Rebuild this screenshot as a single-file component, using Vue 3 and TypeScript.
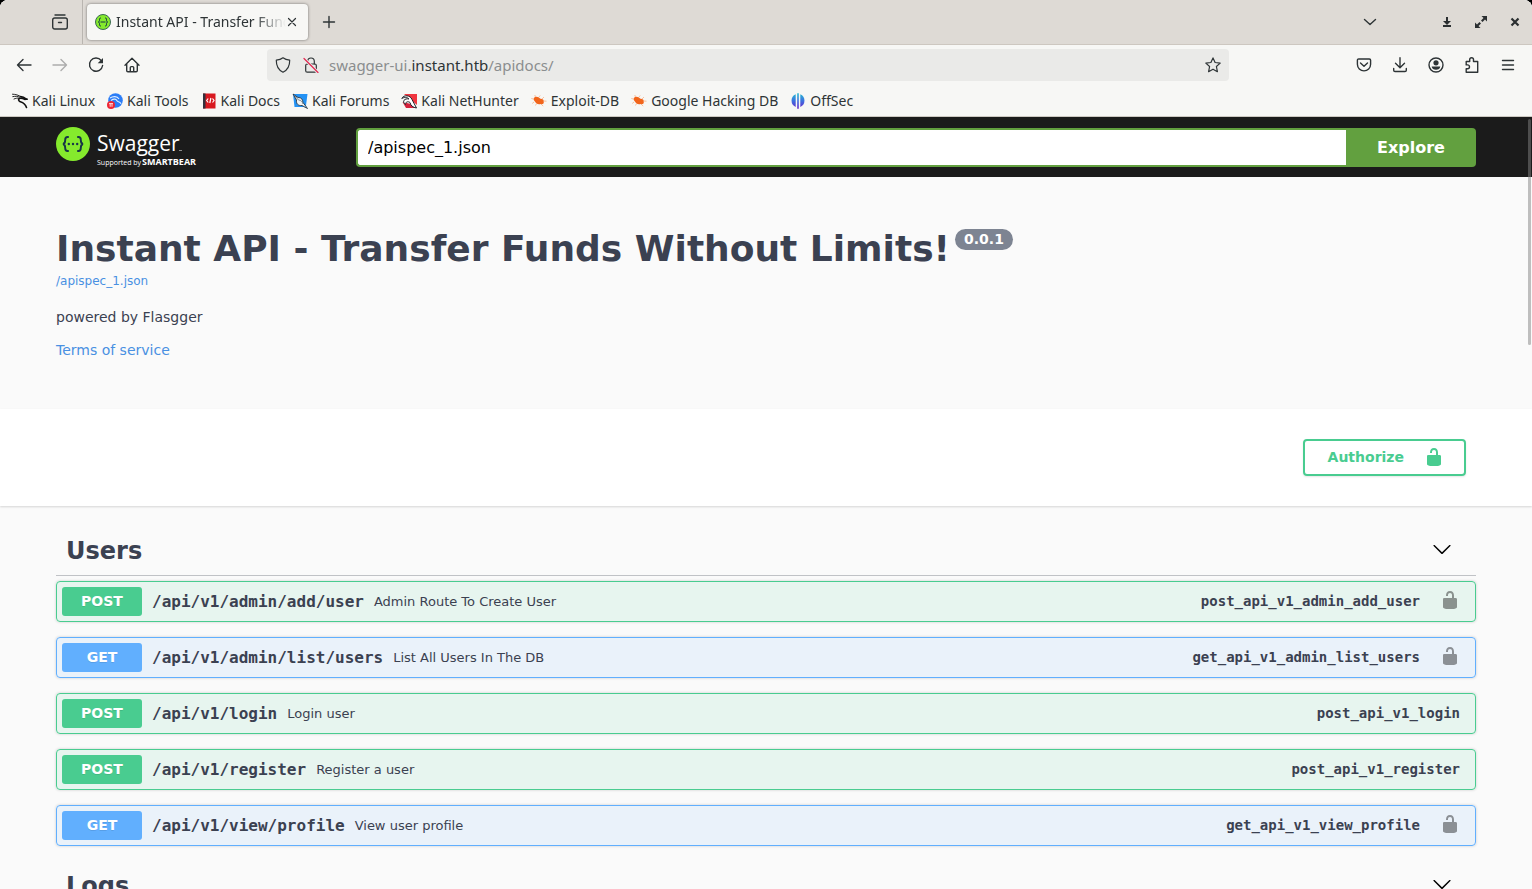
<script setup lang="ts">
import { ref } from 'vue'

type Method = 'POST' | 'GET'

interface Operation {
  method: Method
  path: string
  summary: string
  id: string
  locked: boolean
}

interface Tag {
  name: string
  open: boolean
  operations: Operation[]
}

const bookmarks = [
  { label: 'Kali Linux', icon: 'dragon' },
  { label: 'Kali Tools', icon: 'tools' },
  { label: 'Kali Docs', icon: 'docs' },
  { label: 'Kali Forums', icon: 'forums' },
  { label: 'Kali NetHunter', icon: 'nethunter' },
  { label: 'Exploit-DB', icon: 'bug' },
  { label: 'Google Hacking DB', icon: 'bug' },
  { label: 'OffSec', icon: 'offsec' },
]

const specUrl = ref('/apispec_1.json')

const tags = ref<Tag[]>([
  {
    name: 'Users',
    open: true,
    operations: [
      { method: 'POST', path: '/api/v1/admin/add/user', summary: 'Admin Route To Create User', id: 'post_api_v1_admin_add_user', locked: true },
      { method: 'GET', path: '/api/v1/admin/list/users', summary: 'List All Users In The DB', id: 'get_api_v1_admin_list_users', locked: true },
      { method: 'POST', path: '/api/v1/login', summary: 'Login user', id: 'post_api_v1_login', locked: false },
      { method: 'POST', path: '/api/v1/register', summary: 'Register a user', id: 'post_api_v1_register', locked: false },
      { method: 'GET', path: '/api/v1/view/profile', summary: 'View user profile', id: 'get_api_v1_view_profile', locked: true },
    ],
  },
  { name: 'Logs', open: true, operations: [] },
])

const lockPath =
  'M15.8 8H14V5.6C14 2.703 12.665 1 10 1 7.334 1 6 2.703 6 5.6V6h2v-.801C8 3.754 8.797 3 10 3c1.203 0 2 .754 2 2.199V8H4c-.553 0-1 .646-1 1.199V17c0 .549.428 1.139.951 1.307l1.197.387C5.672 18.861 6.55 19 7.1 19h5.8c.549 0 1.428-.139 1.951-.307l1.196-.387c.524-.167.953-.757.953-1.306V9.199C17 8.646 16.352 8 15.8 8z'
</script>

<template>
  <div class="window">
    <header class="chrome">
      <div class="tabstrip">
        <button class="tool recent" aria-label="Recent browsing">
          <svg class="line bold" viewBox="0 0 16 16"><path d="M3 1h10" /><rect x=".7" y="4" width="14.6" height="11" rx="2" /><path d="M6.500 8.500h3" /></svg>
        </button>
        <div class="tab">
          <svg class="favicon" viewBox="0 0 16 16">
            <circle cx="8" cy="8" r="7.5" fill="#85ea2d" stroke="#3b6a52" />
            <path d="M6 4c-1.400 0-1.600.6-1.500 1.800.1 1.300-.2 2-1.200 2.200 1 .2 1.300.9 1.200 2.200C4.400 11.400 4.600 12 6 12M10 4c1.400 0 1.600.6 1.500 1.800-.1 1.300.2 2 1.200 2.200-1 .2-1.300.9-1.200 2.200.1 1.200-.1 1.800-1.500 1.800M5.500 8h5" fill="none" stroke="#173647" />
          </svg>
          <span class="tab-title">Instant API - Transfer Funds</span>
          <button class="tab-close" aria-label="Close tab">
            <svg class="line" viewBox="0 0 10 10"><path d="M1.500 1.500l7 7M8.500 1.500l-7 7" /></svg>
          </button>
        </div>
        <button class="tool newtab" aria-label="New tab">
          <svg class="line bold" viewBox="0 0 16 16"><path d="M8 2.500v11M2.500 8h11" /></svg>
        </button>
        <div class="grow"></div>
        <button class="tool alltabs" aria-label="List all tabs">
          <svg class="line bold" viewBox="0 0 16 16"><path d="M2.500 5.500L8 10.500l5.500-5" /></svg>
        </button>
        <button class="win" aria-label="Minimize">
          <svg viewBox="0 0 12 12"><path d="M5 1h2v4h3L6 9 2 5h3zM2 9h8v2H2z" fill="#2b2f31" /></svg>
        </button>
        <button class="win" aria-label="Maximize">
          <svg viewBox="0 0 12 12"><path d="M6.500 0H12v5.500l-2-2L7.500 6 6 4.500 8.500 2zM0 6.500l2 2L4.500 6 6 7.500 3.500 10l2 2H0z" fill="#2b2f31" /></svg>
        </button>
        <button class="win" aria-label="Close window">
          <svg viewBox="0 0 12 12"><path d="M2.500 2.500l7 7M9.500 2.500l-7 7" stroke="#2b2f31" stroke-width="2.200" /></svg>
        </button>
      </div>

      <nav class="navbar" aria-label="Navigation">
        <button class="tool" aria-label="Back">
          <svg class="line bold" viewBox="0 0 16 16"><path d="M15 8H1.500M7 2.500L1.500 8 7 13.500" /></svg>
        </button>
        <button class="tool faded" aria-label="Forward">
          <svg class="line bold" viewBox="0 0 16 16"><path d="M1 8h13.500M9 2.500L14.500 8 9 13.500" /></svg>
        </button>
        <button class="tool" aria-label="Reload">
          <svg class="line bold" viewBox="0 0 16 16"><path d="M13.200 3.500A6.600 6.600 0 1 0 14.600 8.500" /><path d="M15 1v5.300H9.700z" fill="currentColor" stroke="none" /></svg>
        </button>
        <button class="tool" aria-label="Home">
          <svg class="line bold" viewBox="0 0 16 16"><path d="M1 8.300L8 1.300l7 7M2.700 7v6.500c0 .8.400 1.200 1.200 1.200h8.200c.8 0 1.200-.4 1.200-1.200V7M6.300 14.500v-4c0-.6.300-.9.900-.9h1.600c.6 0 .9.300.9.900v4" /></svg>
        </button>
        <div class="spring"></div>
        <div class="urlbar">
          <svg class="line" viewBox="0 0 16 16"><path d="M8 .8c2 1.600 4.300 2.200 6.700 2.400C14.800 8.700 12.500 13 8 15.200 3.500 13 1.200 8.700 1.300 3.200 3.700 3 6 2.400 8 .8z" /></svg>
          <svg class="line" viewBox="0 0 16 16"><path d="M4.700 7V4.300a3.300 3.300 0 0 1 6.600 0V7" /><rect x="2.700" y="7" width="10.600" height="8.200" rx="1.500" /><path d="M1 1.500l14 14" class="slash-gap" /><path d="M1 1.500l14 14" class="slash" /></svg>
          <span class="address">swagger-ui.<b>instant.htb</b>/apidocs/</span>
          <button class="star" aria-label="Bookmark this page">
            <svg class="line" viewBox="0 0 16 16"><path d="M8 .9l2.100 4.600 5.100.6-3.800 3.400 1 5.200L8 12.200l-4.400 2.500 1-5.200L.8 6.100l5.100-.6z" /></svg>
          </button>
        </div>
        <div class="spring"></div>
        <button class="tool" aria-label="Save to Pocket">
          <svg class="line bold" viewBox="0 0 16 16"><path d="M2.700 2h10.600c.8 0 1.300.5 1.300 1.300v4a6.600 6.600 0 0 1-13.200 0v-4C1.400 2.500 1.900 2 2.700 2z" /><path d="M4.500 6L8 9.300 11.500 6" /></svg>
        </button>
        <button class="tool" aria-label="Downloads">
          <svg class="line bold" viewBox="0 0 16 16"><path d="M8 .7v9.800M3.500 6.300L8 10.700l4.500-4.400M1.700 11.500v1.700c0 .9.400 1.300 1.300 1.300h10c.9 0 1.300-.4 1.300-1.300v-1.700" /></svg>
        </button>
        <button class="tool" aria-label="Account">
          <svg class="line bold" viewBox="0 0 16 16"><circle cx="8" cy="8" r="7" /><circle cx="8" cy="5.800" r="2.600" fill="currentColor" stroke="none" /><path d="M3.700 9.500h8.600c0 2-2 3.300-4.300 3.300s-4.300-1.300-4.300-3.300z" fill="currentColor" stroke="none" /></svg>
        </button>
        <button class="tool" aria-label="Extensions">
          <svg class="line bold" viewBox="0 0 16 16"><path d="M2.200 4.500h3.500V2.600a1.900 1.900 0 0 1 3.800 0v1.900h4.200v10.700H2.200v-3.500h1.400a1.900 1.900 0 0 0 0-3.800H2.200z" /></svg>
        </button>
        <button class="tool" aria-label="Application menu">
          <svg class="line bold" viewBox="0 0 16 16"><path d="M2.500 3.500h11M2.500 8h11M2.500 12.500h11" /></svg>
        </button>
      </nav>

      <nav class="bookmarks" aria-label="Bookmarks">
        <a v-for="mark in bookmarks" :key="mark.label" href="#" class="bookmark">
          <svg viewBox="0 0 16 16">
            <g v-if="mark.icon === 'dragon'" fill="none" stroke="#111" stroke-linecap="round">
              <path d="M.5 1.200c3 .1 6 .8 8.500 2.600M.8 3.600c2.700-.5 5-.3 7 .6M2 6c1.700-.8 3.500-1.100 5-.8" stroke-width=".9" />
              <path d="M8.500 3.500c2 .2 3.700.8 4.700 1.900l1.500.7-2 .3c-1.700-.8-3.700-1.400-5.200-.9-1.500.8-1 2.600.7 3.200 2.500.8 5 1.500 6.300 5.800" stroke-width="1.600" />
            </g>
            <g v-else-if="mark.icon === 'tools'">
              <circle cx="8.500" cy="7.500" r="7.300" fill="#2b7df7" />
              <path d="M3 5c3-2 7-2 9 1M4 7.500c3-2 5-1.500 6 .2.800 1.300 3 .8 4 3" fill="none" stroke="#dcecff" stroke-width="1.200" />
              <circle cx="4" cy="12" r="4" fill="#ee2634" />
              <path d="M2 10.600h4M3.200 10.600v3.200M5 10.600v3.200" fill="none" stroke="#fff" stroke-width=".8" />
            </g>
            <g v-else-if="mark.icon === 'docs'">
              <path d="M2 .5h12.500v15H2z" fill="#d81920" />
              <path d="M2 .5h2.500v15H2z" fill="#33313d" />
              <path d="M7.200 5.500L5.700 7.500l1.500 2M11.500 5.500l1.500 2-1.500 2M9.900 5L8.800 10" fill="none" stroke="#fff" stroke-width="1.200" />
            </g>
            <g v-else-if="mark.icon === 'forums'">
              <path d="M1 1h14.500L14 12.500l.5 2-3-.5H2.500z" fill="#2492f4" />
              <path d="M1 1l5 3.500c3.500 0 4.500 1.500 5 5l4.500 6-5.500-3c-4 .5-6-2-5.500-5.500z" fill="#f1f3f4" stroke="#263746" stroke-width=".9" />
              <path d="M2.500 2.500l4 4.500c2.500 0 4 2 4.500 4" fill="none" stroke="#60717e" stroke-width=".8" />
            </g>
            <g v-else-if="mark.icon === 'nethunter'">
              <path d="M3 1h13v11z" fill="#f0353f" />
              <path d="M1.500 9L5 15h9l-4-4z" fill="#d5203c" />
              <path d="M.8 5.500C2.500 1.500 9.500 2 11 6.500l4.500 8.500c-3.500-.5-6-2.500-6.500-5.500-2-1.500-4.500-.8-4.500 2C.5 8.500 3.500 5 8 6 6 3.800 3.500 4 .8 5.500z" fill="#fff" stroke="#1d2028" stroke-width="1" />
            </g>
            <g v-else-if="mark.icon === 'bug'">
              <path d="M3 4.800c2.200-2 4.500-.8 6.500.9 2.400 0 3.800 1.800 3.200 3.200.6 1.600-1.300 2.800-3.200 2-2.400.8-4.600-.5-5.600-2.400C2.600 7.300 2.300 6.300 3 4.800z" fill="#f2651b" />
              <path d="M4.500 4L3.800 2M8 4l1.200-1.500M11 6l2-2M12.500 8l3 .2M3 9l-1.800 1.500M5.500 10.500L4.500 12.500M10 11l2.200 2.200M2.500 6L.3 5.500" fill="none" stroke="#f7a878" stroke-width=".7" />
            </g>
            <g v-else>
              <path d="M5.700 1.200v12.800A7 7 0 0 1 5.700 1.200zM10.300 1.200v12.800a7 7 0 0 0 0-12.800zM7.200.3h1.600v15.500H7.200z" fill="url(#offsec-fill)" />
              <defs>
                <linearGradient id="offsec-fill" gradientUnits="userSpaceOnUse" x1="0" y1="0" x2="0" y2="16">
                  <stop offset="0" stop-color="#25bfd0" /><stop offset=".5" stop-color="#3d6fe0" /><stop offset="1" stop-color="#6a22c8" />
                </linearGradient>
              </defs>
            </g>
          </svg>
          <span>{{ mark.label }}</span>
        </a>
      </nav>
    </header>

    <div class="viewport">
      <div class="topbar">
        <div class="wrapper topbar-row">
          <a href="#" class="brand" aria-label="Swagger, supported by SmartBear">
            <svg viewBox="0 0 142 40">
              <circle cx="17" cy="17" r="17" fill="#85ea2d" />
              <path d="M12.800 10h-1.300c-2 0-2.300 1-2.300 2.700 0 2.400.1 3.800-2.200 4.300 2.300.5 2.200 1.900 2.200 4.300 0 1.700.3 2.700 2.300 2.700h1.300M21.200 10h1.300c2 0 2.300 1 2.300 2.700 0 2.400-.1 3.800 2.200 4.300-2.300.5-2.200 1.900-2.200 4.300 0 1.700-.3 2.700-2.300 2.700h-1.300" fill="none" stroke="#173647" stroke-width="1.900" />
              <g fill="#173647"><circle cx="12.800" cy="17" r="1.200" /><circle cx="17" cy="17" r="1.200" /><circle cx="21.200" cy="17" r="1.200" /></g>
              <text x="41" y="24" class="word">Swagger</text>
              <path d="M123 23.500h3" stroke="#aaa" stroke-width=".8" />
              <text x="41" y="38" class="supported">Supported by</text>
              <text x="86" y="38" class="smartbear">SMARTBEAR</text>
            </svg>
          </a>
          <form class="spec-form" @submit.prevent>
            <input v-model="specUrl" type="text" aria-label="Specification URL" />
            <button type="submit">Explore</button>
          </form>
        </div>
      </div>

      <main>
        <section class="wrapper info">
          <h1>Instant API - Transfer Funds Without Limits!<span class="version">0.0.1</span></h1>
          <a href="#" class="spec-link">/apispec_1.json</a>
          <p>powered by Flasgger</p>
          <a href="#" class="terms">Terms of service</a>
        </section>

        <section class="schemes">
          <div class="wrapper schemes-row">
            <button class="authorize">
              <span>Authorize</span>
              <svg viewBox="0 0 20 20"><path :d="lockPath" /></svg>
            </button>
          </div>
        </section>

        <div class="wrapper tags">
          <section v-for="tag in tags" :key="tag.name">
            <h2>
              <button class="tag" :aria-expanded="tag.open" @click="tag.open = !tag.open">
                <span>{{ tag.name }}</span>
                <svg viewBox="0 0 20 20"><path d="M17.418 6.109c.272-.268.709-.268.979 0s.271.701 0 .969l-7.908 7.830c-.270.268-.707.268-.979 0l-7.908-7.830c-.270-.268-.270-.701 0-.969.271-.268.709-.268.979 0L10 13.250l7.418-7.141z" /></svg>
              </button>
            </h2>
            <template v-if="tag.open">
              <button v-for="op in tag.operations" :key="op.id" class="op" :class="op.method.toLowerCase()">
                <span class="method">{{ op.method }}</span>
                <span class="path">{{ op.path }}</span>
                <span class="summary">{{ op.summary }}</span>
                <span class="op-id">{{ op.id }}</span>
                <svg v-if="op.locked" class="lock" viewBox="0 0 20 20"><path :d="lockPath" /></svg>
              </button>
            </template>
          </section>
        </div>
      </main>
      <div class="scroll-thumb"></div>
    </div>
  </div>
</template>

<style>
body {
  margin: 0;
  background: #000;
}
</style>

<style scoped>
* {
  box-sizing: border-box;
}
button {
  margin: 0;
  padding: 0;
  border: 0;
  background: none;
  font: inherit;
  color: inherit;
}
a {
  text-decoration: none;
}
svg {
  display: block;
  flex: none;
}
.window {
  display: flex;
  flex-direction: column;
  height: 100vh;
  overflow: hidden;
  border-radius: 8px 8px 0 0;
  background: #fafafa;
  font-family: "DejaVu Sans", sans-serif;
  color: #3b4151;
}

/* Browser chrome */
.chrome {
  flex: none;
  background: #f7f7f5;
  border-bottom: 1px solid #cdc9c2;
  color: #2e3436;
  font: 14px/20px "Noto Sans", sans-serif;
}
.line {
  width: 16px;
  height: 16px;
  fill: none;
  stroke: currentColor;
  stroke-width: 1.2;
  stroke-linecap: round;
  stroke-linejoin: round;
}
.bold {
  stroke-width: 1.4;
}
.grow {
  flex: 1;
}
.tabstrip {
  display: flex;
  align-items: center;
  height: 45px;
  background: #dedad5;
  border-bottom: 1px solid #cdc7c0;
}
.tool {
  display: grid;
  place-items: center;
  width: 36px;
  height: 36px;
}
.recent {
  width: 83px;
  height: 44px;
  padding-left: 37px;
  border-right: 1px solid #b9b5b0;
}
.tab {
  display: flex;
  align-items: center;
  width: 221px;
  height: 36px;
  margin-left: 4px;
  padding: 0 10px 0 8px;
  border-radius: 4px;
  background: #f7f7f5;
  box-shadow: 0 0 3px rgba(0, 0, 0, 0.5);
}
.favicon {
  width: 16px;
  height: 16px;
}
.tab-title {
  flex: 1;
  margin-left: 5px;
  overflow: hidden;
  white-space: nowrap;
  mask-image: linear-gradient(to left, transparent, #000 32px);
}
.tab-close {
  display: grid;
  place-items: center;
  width: 12px;
  height: 20px;
}
.tab-close .line {
  width: 10px;
  height: 10px;
}
.newtab {
  margin-left: 3px;
}
.alltabs {
  margin-right: 42px;
}
.win {
  display: grid;
  place-items: center;
  width: 34px;
  height: 36px;
}
.win svg {
  width: 12px;
  height: 12px;
}
.navbar {
  display: flex;
  align-items: center;
  height: 40px;
  padding: 0 6px;
}
.faded {
  color: #adadac;
}
.spring {
  flex: 117;
}
.urlbar {
  flex: 946;
  display: flex;
  align-items: center;
  gap: 12px;
  height: 32px;
  padding: 0 8px;
  border-radius: 4px;
  background: #eaeae8;
}
.slash-gap {
  stroke: #eaeae8;
  stroke-width: 3;
}
.slash {
  stroke: #e22850;
}
.address {
  flex: 1;
  margin-left: -2px;
  font-size: 15px;
  color: #8b8e8f;
}
.address b {
  font-weight: 400;
  color: #2e3436;
}
.bookmarks {
  display: flex;
  gap: 12px;
  height: 31px;
  padding: 0 12px;
}
.bookmark {
  display: flex;
  align-items: center;
  gap: 4px;
  color: #2e3436;
  white-space: nowrap;
}
.bookmark svg {
  width: 16px;
  height: 16px;
}

/* API page */
.viewport {
  position: relative;
  flex: 1;
  min-height: 0;
  overflow: hidden;
}
.scroll-thumb {
  position: absolute;
  top: 2px;
  right: 1px;
  width: 3px;
  height: 226px;
  border-radius: 2px;
  background: rgba(130, 130, 130, 0.5);
}
.wrapper {
  width: 100%;
  max-width: 1460px;
  margin: 0 auto;
  padding: 0 20px;
}
.topbar {
  background: #1b1b1b;
}
.topbar-row {
  display: flex;
  align-items: center;
  padding-top: 10px;
  padding-bottom: 10px;
}
.brand {
  flex: none;
  width: 300px;
}
.brand svg {
  width: 142px;
  height: 40px;
  overflow: visible;
}
.word,
.supported,
.smartbear {
  fill: #fff;
  font-family: "Open Sans", sans-serif;
}
.word {
  font-size: 21px;
}
.supported {
  font-size: 7px;
}
.smartbear {
  font-size: 9px;
  font-weight: 700;
}
.spec-form {
  display: flex;
  flex: 1;
  height: 39px;
}
.spec-form input {
  flex: 1;
  min-width: 0;
  padding: 0 10px;
  border: 2px solid #62a03f;
  border-right: 0;
  border-radius: 4px 0 0 4px;
  background: #fff;
  font: 16px "DejaVu Sans", sans-serif;
  color: #000;
  outline: none;
}
.spec-form button {
  width: 130px;
  border-radius: 0 4px 4px 0;
  background: #62a03f;
  font-size: 16px;
  font-weight: 700;
  color: #fff;
}
.info {
  padding-top: 51px;
  padding-bottom: 51px;
  font-size: 14px;
  line-height: 16px;
}
.info h1 {
  display: flex;
  align-items: flex-start;
  margin: 0;
  font-size: 36px;
  line-height: 42px;
}
.version {
  margin: 1px 0 0 5px;
  padding: 0 9px;
  border-radius: 11px;
  background: #7d8492;
  font-size: 14px;
  line-height: 21px;
  color: #fff;
}
.info a {
  display: block;
  width: fit-content;
  color: #4990e2;
}
.info .spec-link {
  margin-top: 3px;
  font-size: 12px;
}
.info p {
  margin: 20px 0 17px;
}
.schemes {
  padding: 30px 0;
  background: #fff;
  box-shadow: 0 1px 2px rgba(0, 0, 0, 0.15);
}
.schemes-row {
  display: flex;
  justify-content: flex-end;
  padding-right: 30px;
}
.authorize {
  display: flex;
  align-items: center;
  gap: 20px;
  height: 37px;
  padding: 0 20px 2px 23px;
  border: 2px solid #49cc90;
  border-radius: 4px;
  box-shadow: 0 1px 2px rgba(0, 0, 0, 0.1);
  font-size: 14px;
  font-weight: 700;
  color: #49cc90;
}
.authorize svg {
  width: 20px;
  height: 20px;
  fill: #49cc90;
}
.tags {
  padding-top: 20px;
}
.tags h2 {
  margin: 0 0 5px;
  font-size: 24px;
}
.tag {
  display: flex;
  align-items: center;
  justify-content: space-between;
  width: 100%;
  height: 50px;
  padding: 0 24px 0 10px;
  border-bottom: 1px solid rgba(59, 65, 81, 0.3);
}
.tag svg {
  width: 20px;
  height: 20px;
  margin-bottom: 3px;
  fill: #000;
}
.op {
  display: flex;
  align-items: center;
  width: 100%;
  margin-bottom: 15px;
  padding: 5px 15px 5px 5px;
  border: 1px solid;
  border-radius: 4px;
  box-shadow: 0 0 3px rgba(0, 0, 0, 0.19);
  text-align: left;
}
.post {
  border-color: #49cc90;
  background: rgba(73, 204, 144, 0.1);
}
.get {
  border-color: #61affe;
  background: rgba(97, 175, 254, 0.1);
}
.method {
  width: 80px;
  border-radius: 3px;
  font-size: 14px;
  font-weight: 700;
  line-height: 29px;
  text-align: center;
  text-shadow: 0 1px 0 rgba(0, 0, 0, 0.1);
  color: #fff;
}
.post .method {
  background: #49cc90;
}
.get .method {
  background: #61affe;
}
.path,
.op-id {
  font-family: "DejaVu Sans Mono", monospace;
  font-weight: 700;
}
.path {
  padding: 0 10px;
  font-size: 16px;
}
.summary {
  flex: 1;
  font-size: 13px;
}
.op-id {
  padding-bottom: 2px;
  font-size: 14px;
}
.lock {
  width: 20px;
  height: 20px;
  margin: 0 0 3px 20px;
  opacity: 0.4;
}
</style>
